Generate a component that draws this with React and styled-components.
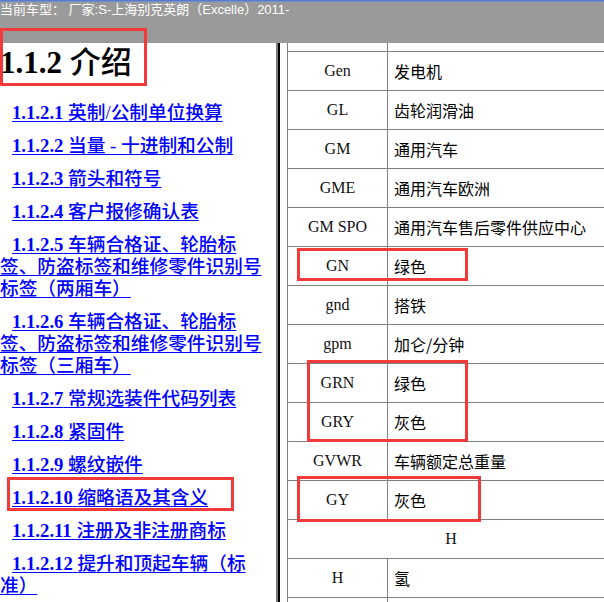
import React from 'react'
import styled, { createGlobalStyle } from 'styled-components'

const GlobalStyle = createGlobalStyle`
html, body {
  margin: 0;
  padding: 0;
  background: #fff;
}
body {
  width: 604px;
  height: 602px;
  overflow: hidden;
}
`

const Page = styled.div`
position: relative;
width: 604px;
height: 602px;
display: flex;
flex-direction: column;
overflow: hidden;
`

const TopBar = styled.div`
height: 43px;
flex: none;
box-sizing: border-box;
background: linear-gradient(#4a70c8 0, #7f9ad8 2px, #9a9a9a 2px);
color: #fff;
font-family: "Liberation Sans", "Noto Sans CJK SC", sans-serif;
font-size: 13px;
line-height: 19px;
white-space: nowrap;
overflow: hidden;
`

const Caption = styled.div`
padding-left: 0;
`

const Body = styled.div`
flex: 1;
display: flex;
min-height: 0;
`

const LeftPane = styled.div`
width: 276px;
flex: none;
overflow: hidden;
`

const Heading = styled.h2`
margin: 0 0 19px 0;
font-family: "Liberation Serif", "Noto Sans CJK SC", serif;
font-size: 31px;
font-weight: bold;
line-height: 40px;
color: #000;
white-space: nowrap;
`

const HeadingTitle = styled.span`
font-weight: 500;
`

const LinkList = styled.div`
width: 268px;
`

const TocLink = styled.a`
display: block;
margin: 0 0 11px;
text-indent: 12px;
font-family: "Liberation Serif", "Noto Sans CJK SC", serif;
font-size: 18.7px;
font-weight: bold;
line-height: 22px;
color: #0000ff;
text-decoration: underline;
text-underline-offset: 2px;
cursor: pointer;
`

const LinkTitle = styled.span`
font-weight: 500;
`

const Divider = styled.div`
width: 2px;
flex: none;
background: #000;
border-left: 2px solid #7a7a7a;
`

const RightPane = styled.div`
flex: 1;
padding-left: 7px;
overflow: hidden;
`

const Grid = styled.div`
width: 326px;
border-left: 1px solid #808080;
`

const Row = styled.div`
display: grid;
grid-template-columns: ${p => (p.$span ? '1fr' : '100px 1fr')};
height: ${p => p.$h || 38}px;
border-bottom: 1px solid #808080;
`

const Code = styled.div`
display: flex;
align-items: center;
justify-content: center;
border-right: 1px solid #808080;
font-family: "Liberation Serif", serif;
font-size: 16px;
color: #111;
`

const Meaning = styled.div`
display: flex;
align-items: center;
padding-left: 6px;
font-family: "Noto Sans CJK SC", "Liberation Sans", sans-serif;
font-size: 16px;
color: #000;
white-space: nowrap;
`

const SpanCell = styled.div`
display: flex;
align-items: center;
justify-content: center;
font-family: "Liberation Serif", serif;
font-size: 16px;
color: #111;
`

const Mark = styled.div`
position: absolute;
left: ${p => p.$x}px;
top: ${p => p.$y}px;
width: ${p => p.$w}px;
height: ${p => p.$h}px;
box-sizing: border-box;
border: 3px solid #f23a3a;
pointer-events: none;
`

const links = [
  ['1.1.2.1', '英制/公制单位换算'],
  ['1.1.2.2', '当量 - 十进制和公制'],
  ['1.1.2.3', '箭头和符号'],
  ['1.1.2.4', '客户报修确认表'],
  ['1.1.2.5', '车辆合格证、轮胎标签、防盗标签和维修零件识别号标签（两厢车）'],
  ['1.1.2.6', '车辆合格证、轮胎标签、防盗标签和维修零件识别号标签（三厢车）'],
  ['1.1.2.7', '常规选装件代码列表'],
  ['1.1.2.8', '紧固件'],
  ['1.1.2.9', '螺纹嵌件'],
  ['1.1.2.10', '缩略语及其含义'],
  ['1.1.2.11', '注册及非注册商标'],
  ['1.1.2.12', '提升和顶起车辆（标准）'],
]

const rows = [
  ['Gen', '发电机'],
  ['GL', '齿轮润滑油'],
  ['GM', '通用汽车'],
  ['GME', '通用汽车欧洲'],
  ['GM SPO', '通用汽车售后零件供应中心'],
  ['GN', '绿色'],
  ['gnd', '搭铁'],
  ['gpm', '加仑/分钟'],
  ['GRN', '绿色'],
  ['GRY', '灰色'],
  ['GVWR', '车辆额定总重量'],
  ['GY', '灰色'],
  ['H'],
  ['H', '氢'],
  ['', ''],
]

const marks = [
  { x: 0, y: 28, w: 147, h: 58 },
  { x: 7, y: 477, w: 227, h: 34 },
  { x: 297, y: 248, w: 171, h: 33 },
  { x: 307, y: 360, w: 161, h: 82 },
  { x: 297, y: 476, w: 184, h: 46 },
]

export default function App() {
  return (
    <>
      <GlobalStyle />
      <Page>
        <TopBar>
          <Caption>当前车型： 厂家:S-上海别克英朗（Excelle）2011-</Caption>
        </TopBar>
        <Body>
          <LeftPane>
            <Heading>
              1.1.2 <HeadingTitle>介绍</HeadingTitle>
            </Heading>
            <LinkList>
              {links.map(([num, title], i) => (
                <TocLink key={i}>
                  {num} <LinkTitle>{title}</LinkTitle>
                </TocLink>
              ))}
            </LinkList>
          </LeftPane>
          <Divider />
          <RightPane>
            <Grid>
              <Row $h={8}>
                <Code />
                <Meaning />
              </Row>
              {rows.map((r, i) =>
                r.length === 1 ? (
                  <Row key={i} $span>
                    <SpanCell>{r[0]}</SpanCell>
                  </Row>
                ) : (
                  <Row key={i}>
                    <Code>{r[0]}</Code>
                    <Meaning>{r[1]}</Meaning>
                  </Row>
                )
              )}
            </Grid>
          </RightPane>
        </Body>
        {marks.map((m, i) => (
          <Mark key={i} $x={m.x} $y={m.y} $w={m.w} $h={m.h} />
        ))}
      </Page>
    </>
  )
}
